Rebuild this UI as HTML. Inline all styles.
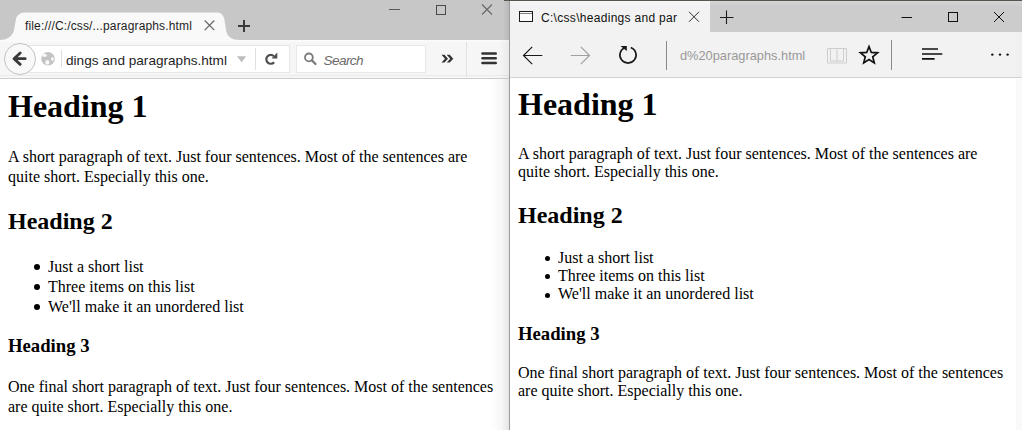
<!DOCTYPE html>
<html><head><meta charset="utf-8">
<style>
*{margin:0;padding:0;box-sizing:border-box}
html,body{width:1022px;height:430px;overflow:hidden;background:#fff;position:relative}
.a{position:absolute}
.sans{font-family:"Liberation Sans",sans-serif;white-space:nowrap;line-height:normal}
.serif{font-family:"Liberation Serif",serif;color:#000;white-space:nowrap}
.h1{font-size:32px;font-weight:bold;line-height:36px}
.h2{font-size:24px;font-weight:bold;line-height:28px}
.h3{font-size:18.72px;font-weight:bold;line-height:22px}
.p{font-size:16px;line-height:20px}
.pe{font-size:16px;line-height:18px}
svg.ov{position:absolute;left:0;top:0}
</style></head><body>

<!-- ============ FIREFOX (left) ============ -->
<div class="a" style="left:0;top:0;width:509px;height:40px;background:#c7c7c7"></div>
<div class="a" style="left:0;top:40px;width:509px;height:38px;background:#f6f6f6"></div>
<div class="a" style="left:0;top:40px;width:509px;height:2px;background:#fafafa"></div>
<div class="a" style="left:0;top:78px;width:509px;height:1px;background:#cdcdcd"></div>
<div class="a" style="left:0;top:75px;width:509px;height:1px;background:#ebebeb"></div>
<svg class="ov" width="260" height="42"><path d="M0 40 C6 40 12 37 13.8 31 L15.8 20 C16.8 15 19.5 12.4 26 12.4 L217 12.4 C221 12.4 223.5 15 224.3 19 L226.2 31 C227.5 37 232 40 240 40 Z" fill="#f9f9f9"/></svg>
<!-- url bar -->
<div class="a" style="left:20px;top:45px;width:270px;height:28px;background:#fff;border:1px solid #e6e6e6;border-left:none"></div>
<!-- search -->
<div class="a" style="left:296px;top:45px;width:130px;height:28px;background:#fff;border:1px solid #e8e8e8"></div>
<div class="a" style="left:466px;top:42px;width:1px;height:35px;background:#e2e2e2"></div>
<!-- back button -->
<div class="a" style="left:4px;top:43px;width:32px;height:32px;border-radius:50%;background:#f9f9f9;border:1px solid #c2c2c2"></div>

<!-- content -->
<div class="a serif h1" style="left:8px;top:87.5px">Heading 1</div>
<div class="a serif p" style="left:8px;top:147px">A short paragraph of text. Just four sentences. Most of the sentences are<br>quite short. Especially this one.</div>
<div class="a serif h2" style="left:8px;top:206.5px">Heading 2</div>
<div class="a serif p" style="left:48px;top:257px">Just a short list<br>Three items on this list<br>We'll make it an unordered list</div>
<div class="a" style="left:34px;top:264px;width:6px;height:6px;border-radius:50%;background:#000"></div>
<div class="a" style="left:34px;top:284px;width:6px;height:6px;border-radius:50%;background:#000"></div>
<div class="a" style="left:34px;top:304px;width:6px;height:6px;border-radius:50%;background:#000"></div>
<div class="a serif h3" style="left:8px;top:335.2px">Heading 3</div>
<div class="a serif p" style="left:8px;top:377px">One final short paragraph of text. Just four sentences. Most of the sentences<br>are quite short. Especially this one.</div>

<!-- text in chrome -->
<div class="a sans" style="left:25px;top:19px;font-size:12px;letter-spacing:0.15px;color:#1e1e1e">file:///C:/css/...paragraphs.html</div>
<div class="a sans" style="left:66px;top:53px;font-size:13.6px;color:#1e1e1e;width:164px;overflow:hidden">dings and paragraphs.html</div>
<div class="a sans" style="left:323.5px;top:53px;font-size:13.6px;letter-spacing:-0.6px;font-style:italic;color:#6a6a6a">Search</div>

<!-- shadow near right edge -->
<div class="a" style="left:490px;top:79px;width:19px;height:351px;background:linear-gradient(to right,rgba(0,0,0,0),rgba(0,0,0,0.03) 60%,rgba(0,0,0,0.10))"></div>
<div class="a" style="left:499px;top:40px;width:10px;height:38px;background:linear-gradient(to right,rgba(0,0,0,0),rgba(0,0,0,0.05))"></div>
<div class="a" style="left:503px;top:0;width:6px;height:40px;background:linear-gradient(to right,rgba(0,0,0,0),rgba(0,0,0,0.07))"></div>
<div class="a" style="left:509px;top:0;width:1px;height:430px;background:#9c9c9c"></div>

<!-- ============ EDGE (right) ============ -->
<div class="a" style="left:510px;top:0;width:512px;height:32px;background:#cccccc"></div>
<div class="a" style="left:710px;top:1px;width:312px;height:5px;background:linear-gradient(#d6d6d6,#cccccc)"></div>
<div class="a" style="left:504px;top:0;width:518px;height:1px;background:#56564e"></div>
<div class="a" style="left:510px;top:1px;width:200px;height:31px;background:#f2f2f2"></div>
<div class="a" style="left:510px;top:1px;width:200px;height:4px;background:linear-gradient(#f8f8f8,#f2f2f2)"></div>
<div class="a" style="left:519px;top:11px;width:14px;height:11px;border:1px solid #1a1a1a;background:#fafafa"></div>
<div class="a" style="left:520px;top:13px;width:12px;height:1px;background:#808080"></div>
<div class="a sans" style="left:541px;top:10.5px;font-size:12px;letter-spacing:0.3px;color:#111">C:\css\headings and par</div>

<!-- toolbar -->
<div class="a" style="left:510px;top:32px;width:512px;height:45px;background:#f2f2f2"></div>
<div class="a" style="left:510px;top:77px;width:512px;height:1px;background:#d2d2d2"></div>
<div class="a" style="left:666px;top:41px;width:1px;height:29px;background:#8a8a8a"></div>
<div class="a sans" style="left:680px;top:48px;font-size:12.8px;color:#999">d%20paragraphs.html</div>
<div class="a" style="left:891px;top:40px;width:1px;height:30px;background:#8a8a8a"></div>

<!-- scroll strip -->
<div class="a" style="left:1016px;top:79px;width:6px;height:351px;background:#f9f9f9"></div>
<div class="a" style="left:1016px;top:32px;width:6px;height:45px;background:#f0f0f0"></div>

<!-- content -->
<div class="a serif h1" style="left:518px;top:85.6px">Heading 1</div>
<div class="a serif pe" style="left:518px;top:144.8px">A short paragraph of text. Just four sentences. Most of the sentences are<br>quite short. Especially this one.</div>
<div class="a serif h2" style="left:518px;top:200.5px">Heading 2</div>
<div class="a serif pe" style="left:558px;top:249px">Just a short list<br>Three items on this list<br>We'll make it an unordered list</div>
<div class="a" style="left:545px;top:256px;width:5px;height:5px;border-radius:50%;background:#000"></div>
<div class="a" style="left:545px;top:274px;width:5px;height:5px;border-radius:50%;background:#000"></div>
<div class="a" style="left:545px;top:293px;width:5px;height:5px;border-radius:50%;background:#000"></div>
<div class="a serif h3" style="left:518px;top:323.4px">Heading 3</div>
<div class="a serif pe" style="left:518px;top:363.7px">One final short paragraph of text. Just four sentences. Most of the sentences<br>are quite short. Especially this one.</div>

<!-- ============ ICON OVERLAY ============ -->
<svg class="ov" width="1022" height="430" viewBox="0 0 1022 430">
  <!-- tab close -->
  <path d="M204.7 20.5 L214.3 30.1 M214.3 20.5 L204.7 30.1" stroke="#6a6a6a" stroke-width="1.3" fill="none"/>
  <!-- new tab + -->
  <path d="M244 20 V32 M238 26 H250" stroke="#3a3a3a" stroke-width="2" fill="none"/>
  <!-- window controls -->
  <path d="M389 9.5 H400" stroke="#5a5a5a" stroke-width="1" fill="none"/>
  <rect x="436.5" y="5.5" width="9" height="9" stroke="#4a4a4a" stroke-width="1" fill="none"/>
  <path d="M482 4.5 L492 14.5 M492 4.5 L482 14.5" stroke="#6a6a6a" stroke-width="1.2" fill="none"/>
  <!-- back arrow -->
  <path d="M25.2 58.7 H14.5 M20.2 53 L14 58.7 L20.2 64.4" stroke="#3a3a3a" stroke-width="2.8" fill="none" stroke-linecap="round" stroke-linejoin="round"/>
  <!-- globe -->
  <circle cx="48" cy="58.7" r="6.8" fill="#c3c3c3"/>
  <ellipse cx="44.5" cy="55.3" rx="2.2" ry="1.6" fill="#fff" opacity="0.9"/>
  <ellipse cx="47.3" cy="62.4" rx="2" ry="2.3" fill="#fff" opacity="0.9"/>
  <ellipse cx="52.4" cy="59" rx="1.3" ry="2" fill="#fff" opacity="0.9"/>
  <path d="M61.5 50 V67" stroke="#dcdcdc" stroke-width="1" fill="none"/>
  <!-- dropdown -->
  <path d="M237 56.3 H246.2 L241.6 62.3 Z" fill="#bdbdbd"/>
  <path d="M255.5 48 V70" stroke="#e0e0e0" stroke-width="1" fill="none"/>
  <!-- reload -->
  <path d="M274.1 62.2 A4.4 4.4 0 1 1 273.9 56.3" stroke="#4e4e4e" stroke-width="2.2" fill="none"/>
  <path d="M271.6 58.4 L277.3 58.4 L277.3 52.6 Z" fill="#4e4e4e"/>
  <!-- search magnifier -->
  <circle cx="308.9" cy="57.4" r="3.9" stroke="#7a7a7a" stroke-width="1.8" fill="none"/>
  <path d="M311.8 60.3 L315.5 64" stroke="#7a7a7a" stroke-width="2.3" stroke-linecap="round" fill="none"/>
  <!-- overflow chevrons -->
  <path d="M441.5 54.8 L444.5 54.8 L448 58.7 L444.5 62.6 L441.5 62.6 L445 58.7 Z" fill="#333"/>
  <path d="M446.7 54.8 L449.7 54.8 L453.3 58.7 L449.7 62.6 L446.7 62.6 L450.2 58.7 Z" fill="#333"/>
  <!-- hamburger -->
  <path d="M482.5 53.5 H495.7 M482.5 58.2 H495.7 M482.5 63 H495.7" stroke="#333" stroke-width="2.6" stroke-linecap="round" fill="none"/>

  <!-- edge tab close / new tab -->
  <path d="M689 11.8 L699 21.8 M699 11.8 L689 21.8" stroke="#333" stroke-width="1" fill="none"/>
  <path d="M726.5 10.5 V24 M720 17.5 H733.5" stroke="#1e1e1e" stroke-width="1.1" fill="none"/>
  <!-- edge window controls -->
  <path d="M901.5 17.5 H912" stroke="#111" stroke-width="1" fill="none"/>
  <rect x="948.5" y="12.5" width="9" height="9" stroke="#111" stroke-width="1" fill="none"/>
  <path d="M994 12 L1004 22 M1004 12 L994 22" stroke="#111" stroke-width="1" fill="none"/>
  <!-- back / fwd -->
  <path d="M542.3 55.5 H523.5 M532.2 46.8 L523.5 55.5 L532.2 64.2" stroke="#1a1a1a" stroke-width="1.2" fill="none"/>
  <path d="M570.8 55.5 H589.5 M580.8 46.8 L589.5 55.5 L580.8 64.2" stroke="#a0a0a0" stroke-width="1.2" fill="none"/>
  <!-- refresh -->
  <path d="M630.77 47.39 A8.1 8.1 0 1 1 625.23 47.39" stroke="#1a1a1a" stroke-width="1.6" fill="none"/>
  <path d="M620.5 46 L626.8 46 L626.8 51 Z" fill="#1a1a1a"/>
  <!-- book -->
  <path d="M827.5 48.5 H846.5 V63 H827.5 Z M830.5 48.5 V61 H843.5 V48.5 M837 48.5 V61" stroke="#cdcdcd" stroke-width="1" fill="none"/>
  <!-- star -->
  <path d="M869.00 46.60 L871.29 52.44 L877.56 52.82 L872.71 56.81 L874.29 62.88 L869.00 59.50 L863.71 62.88 L865.29 56.81 L860.44 52.82 L866.71 52.44 Z" stroke="#111" stroke-width="1.7" fill="none" stroke-linejoin="miter"/>
  <!-- hub -->
  <path d="M922 49 H938 M922 54 H942.3 M922 58.9 H934.6" stroke="#111" stroke-width="1.6" fill="none"/>
  <!-- more -->
  <circle cx="992.3" cy="54.6" r="1.2" fill="#111"/>
  <circle cx="1000" cy="54.6" r="1.2" fill="#111"/>
  <circle cx="1007.6" cy="54.6" r="1.2" fill="#111"/>
</svg>

</body></html>
